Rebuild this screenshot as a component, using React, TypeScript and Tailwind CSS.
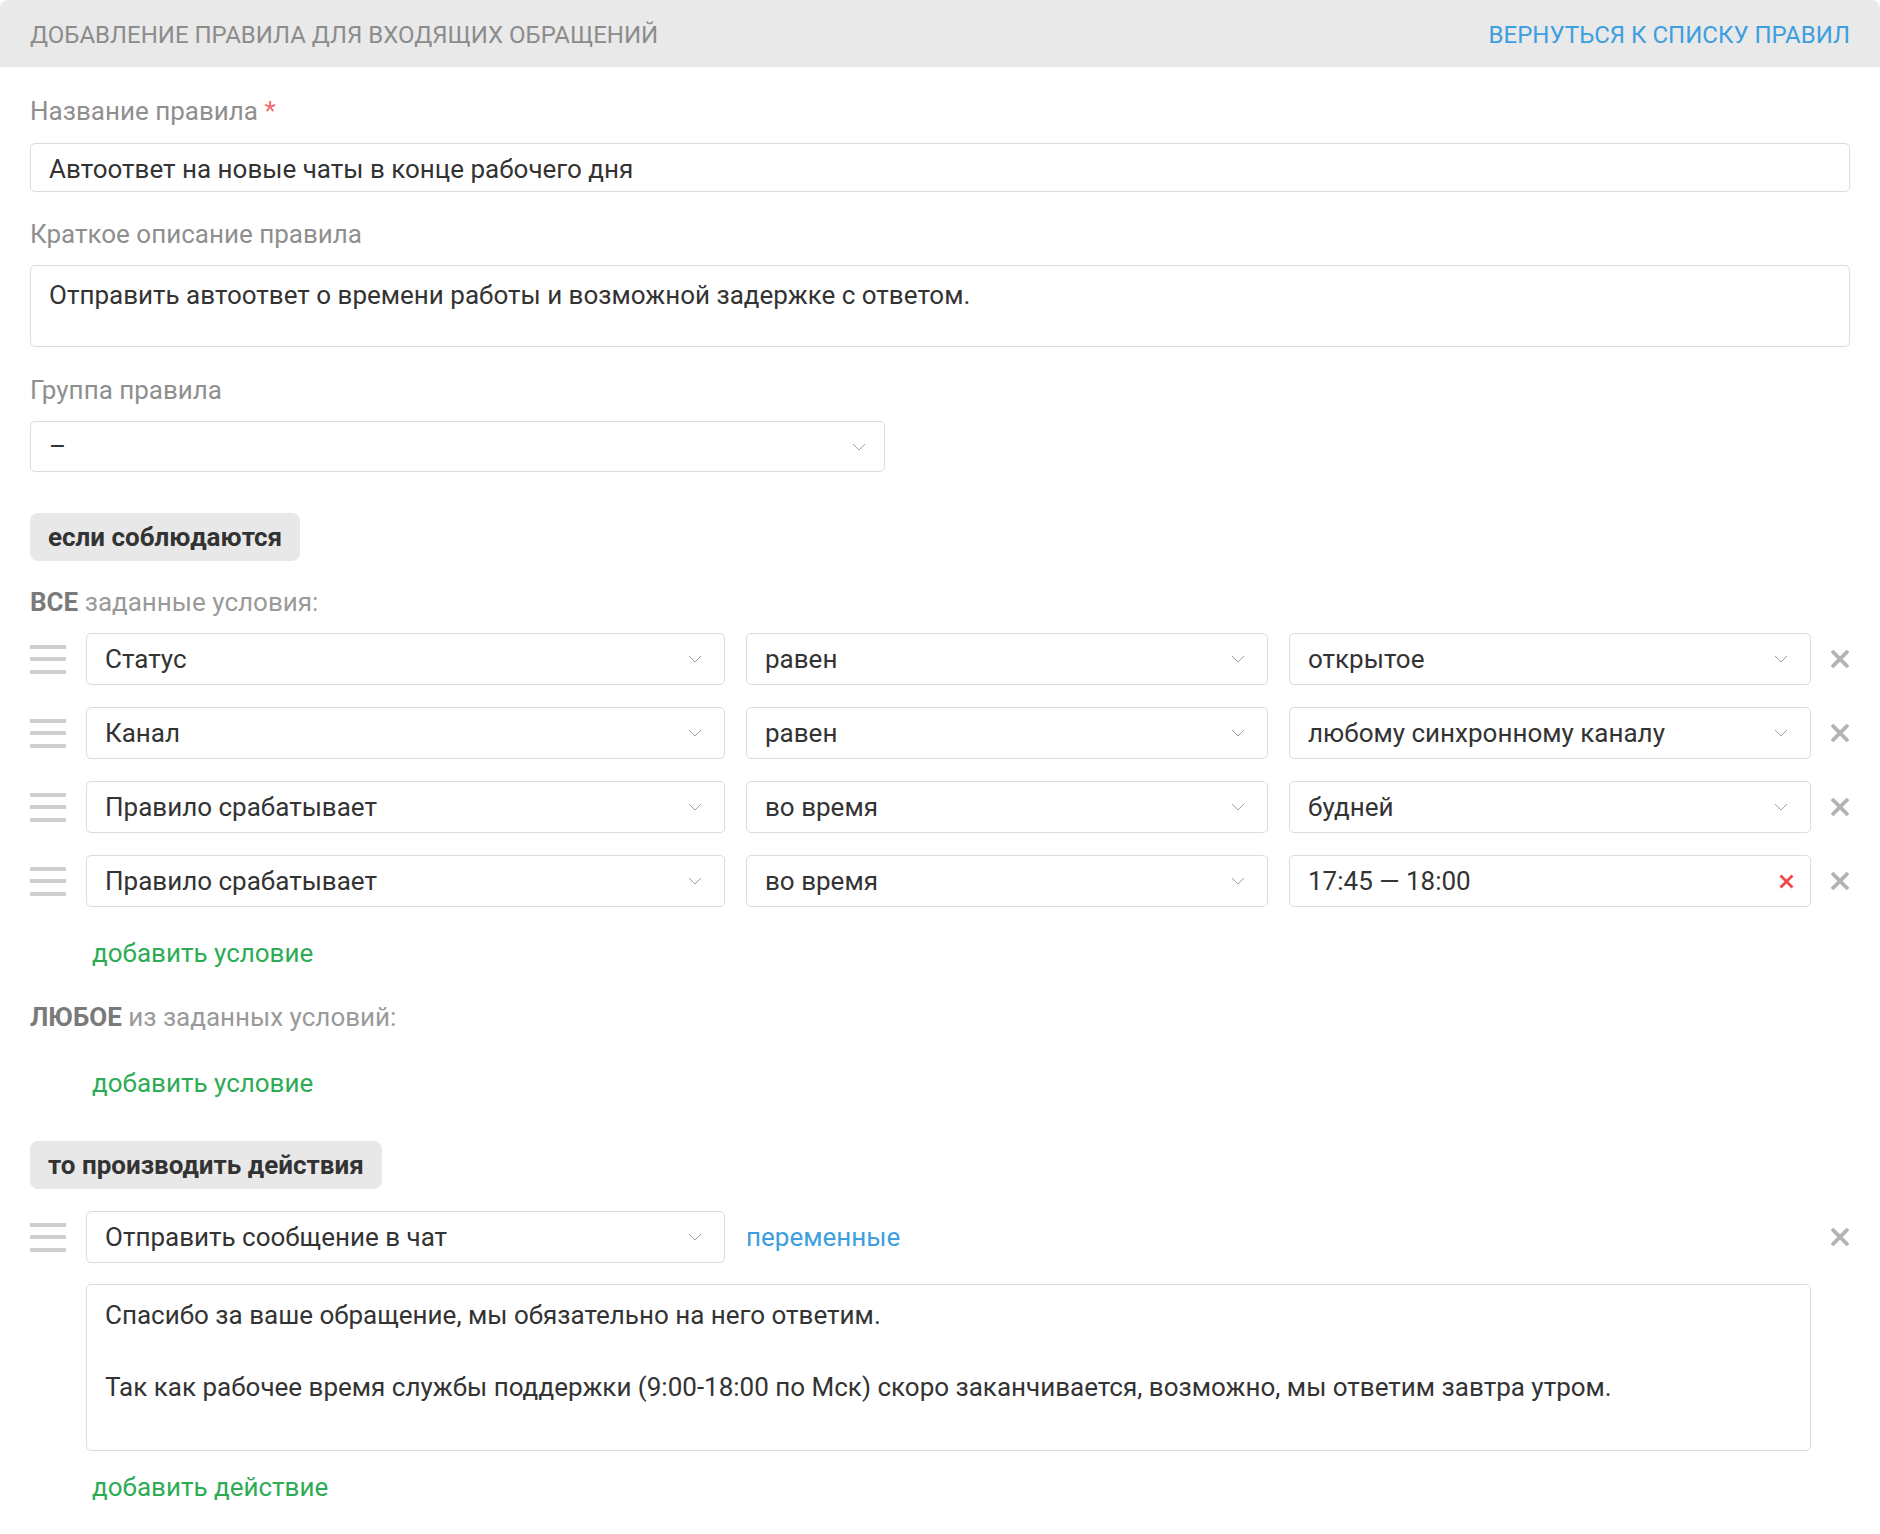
import React from "react";

const Handle = () => (
  <div className="w-[36px] h-[52px] flex flex-col justify-center gap-[8.5px] shrink-0">
    <div className="h-[4px] bg-[#cfcfcf]" />
    <div className="h-[4px] bg-[#cfcfcf]" />
    <div className="h-[4px] bg-[#cfcfcf]" />
  </div>
);

const Chevron = () => (
  <svg width="14" height="8" viewBox="0 0 14 8" className="shrink-0">
    <path d="M1 1 L7 7 L13 1" fill="none" stroke="#a0a0a0" strokeWidth="1" />
  </svg>
);

const XIcon = () => (
  <svg width="20" height="18" viewBox="0 0 20 18" className="shrink-0">
    <path d="M2 1 L18 17 M18 1 L2 17" stroke="#b3b3b3" strokeWidth="3.8" />
  </svg>
);

const RedX = () => (
  <svg width="15" height="15" viewBox="0 0 15 15" className="shrink-0">
    <path d="M1.5 1.5 L13.5 13.5 M13.5 1.5 L1.5 13.5" stroke="#f04848" strokeWidth="2.8" />
  </svg>
);

const Select = ({ text, className = "" }: { text: string; className?: string }) => (
  <div
    className={
      "h-[52px] border border-[#dcdcdc] rounded-[5px] bg-white flex items-center justify-between pl-[18px] pr-[22px] text-[26px] text-[#333] " +
      className
    }
  >
    <span>{text}</span>
    <Chevron />
  </div>
);

const ConditionRow = ({ a, b, c, cross }: { a: string; b: string; c: string; cross?: boolean }) => (
  <div className="flex items-center">
    <Handle />
    <div className="ml-[20px] grid grid-cols-[639px_1fr_1fr] gap-[21px] w-[1725px]">
      <Select text={a} />
      <Select text={b} />
      {cross ? (
        <div className="h-[52px] border border-[#dcdcdc] rounded-[5px] bg-white flex items-center justify-between pl-[18px] pr-[16px] text-[26px] text-[#333]">
          <span>{c}</span>
          <RedX />
        </div>
      ) : (
        <Select text={c} />
      )}
    </div>
    <div className="ml-[19px]">
      <XIcon />
    </div>
  </div>
);

export default function App() {
  return (
    <div className="w-[1880px] min-h-[1534px] bg-white font-['Roboto',sans-serif]">
      <div className="h-[67px] pt-[2px] bg-[#e9e9e9] rounded-t-[8px] flex items-center justify-between px-[30px]">
        <span className="text-[24px] text-[#8c8c8c] uppercase">Добавление правила для входящих обращений</span>
        <a className="text-[24px] text-[#3d9ee0] uppercase">Вернуться к списку правил</a>
      </div>

      <div className="px-[30px]">
        <div className="mt-[30px] h-[28px] leading-[28px] text-[26px] text-[#8f8f8f]">
          Название правила <span className="text-[#f26c6c]">*</span>
        </div>
        <div className="mt-[18px] h-[49px] pt-[3px] border border-[#dcdcdc] rounded-[5px] flex items-center px-[18px] text-[26px] text-[#333]">
          Автоответ на новые чаты в конце рабочего дня
        </div>

        <div className="mt-[28px] h-[28px] leading-[28px] text-[26px] text-[#8f8f8f]">Краткое описание правила</div>
        <div className="mt-[17px] h-[82px] border border-[#dcdcdc] rounded-[5px] px-[18px] py-[11px] leading-[36px] text-[26px] text-[#333]">
          Отправить автоответ о времени работы и возможной задержке с ответом.
        </div>

        <div className="mt-[29px] h-[28px] leading-[28px] text-[26px] text-[#8f8f8f]">Группа правила</div>
        <div className="mt-[17px] w-[855px]">
          <div className="h-[51px] border border-[#dcdcdc] rounded-[5px] bg-white flex items-center justify-between pl-[18px] pr-[18px] text-[26px] text-[#333]">
            <span>–</span>
            <Chevron />
          </div>
        </div>

        <div className="mt-[41px] inline-flex h-[48px] items-center px-[18px] rounded-[8px] bg-[#e8e8e8] text-[26px] font-bold text-[#333]">
          если соблюдаются
        </div>

        <div className="mt-[27px] h-[28px] leading-[28px] text-[26px] text-[#9a9a9a]">
          <b className="text-[#7a7a7a]">ВСЕ</b> заданные условия:
        </div>

        <div className="mt-[17px] flex flex-col gap-[22px]">
          <ConditionRow a="Статус" b="равен" c="открытое" />
          <ConditionRow a="Канал" b="равен" c="любому синхронному каналу" />
          <ConditionRow a="Правило срабатывает" b="во время" c="будней" />
          <ConditionRow a="Правило срабатывает" b="во время" c="17:45 — 18:00" cross />
        </div>

        <div className="mt-[32px] ml-[62px] h-[28px] leading-[28px] text-[26px] text-[#2eac55]">добавить условие</div>

        <div className="mt-[36px] h-[28px] leading-[28px] text-[26px] text-[#9a9a9a]">
          <b className="text-[#7a7a7a]">ЛЮБОЕ</b> из заданных условий:
        </div>

        <div className="mt-[38px] ml-[62px] h-[28px] leading-[28px] text-[26px] text-[#2eac55]">добавить условие</div>

        <div className="mt-[44px] inline-flex h-[48px] items-center px-[18px] rounded-[8px] bg-[#e8e8e8] text-[26px] font-bold text-[#333]">
          то производить действия
        </div>

        <div className="mt-[22px] flex items-center">
          <Handle />
          <div className="ml-[20px] w-[639px]">
            <Select text="Отправить сообщение в чат" />
          </div>
          <a className="ml-[21px] text-[26px] text-[#3d9ee0]">переменные</a>
          <div className="ml-auto">
            <XIcon />
          </div>
        </div>

        <div className="mt-[21px] ml-[56px] w-[1725px] h-[167px] border border-[#dcdcdc] rounded-[5px] px-[18px] py-[12px] leading-[36px] text-[26px] text-[#333]">
          <div>Спасибо за ваше обращение, мы обязательно на него ответим.</div>
          <div>&nbsp;</div>
          <div>
            Так как рабочее время службы поддержки (9:00-18:00 по Мск) скоро заканчивается, возможно, мы ответим завтра утром.
          </div>
        </div>

        <div className="mt-[22px] ml-[62px] h-[28px] leading-[28px] text-[26px] text-[#2eac55]">добавить действие</div>
      </div>
    </div>
  );
}
